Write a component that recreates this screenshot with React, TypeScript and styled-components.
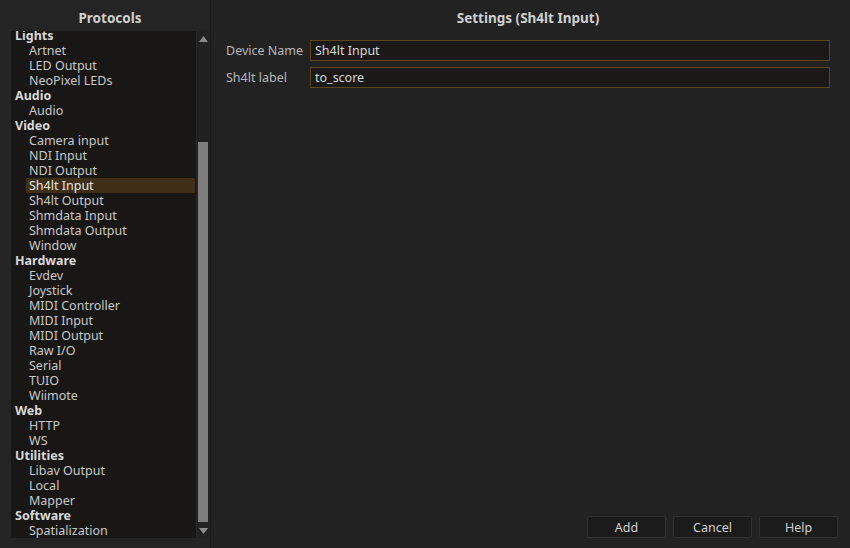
import styled, { createGlobalStyle } from "styled-components";

const groups: { title: string; items: string[] }[] = [
  { title: "Lights", items: ["Artnet", "LED Output", "NeoPixel LEDs"] },
  { title: "Audio", items: ["Audio"] },
  {
    title: "Video",
    items: [
      "Camera input",
      "NDI Input",
      "NDI Output",
      "Sh4lt Input",
      "Sh4lt Output",
      "Shmdata Input",
      "Shmdata Output",
      "Window",
    ],
  },
  {
    title: "Hardware",
    items: [
      "Evdev",
      "Joystick",
      "MIDI Controller",
      "MIDI Input",
      "MIDI Output",
      "Raw I/O",
      "Serial",
      "TUIO",
      "Wiimote",
    ],
  },
  { title: "Web", items: ["HTTP", "WS"] },
  { title: "Utilities", items: ["Libav Output", "Local", "Mapper"] },
  { title: "Software", items: ["Spatialization"] },
];

const selected = "Sh4lt Input";

function App() {
  return (
    <>
      <GlobalStyle />
      <Window>
        <Side>
          <Title>Protocols</Title>
          <ListBox>
            <ListScroll>
              <ListInner>
                {groups.map((g) => (
                  <div key={g.title}>
                    <Category>{g.title}</Category>
                    {g.items.map((item) => (
                      <Item key={g.title + item} active={item === selected}>
                        {item}
                      </Item>
                    ))}
                  </div>
                ))}
              </ListInner>
            </ListScroll>
            <ScrollBar>
              <Arrow>
                <svg width="9" height="6" viewBox="0 0 9 6">
                  <path d="M0 6 L4.5 0 L9 6 Z" fill="#8a8a8a" />
                </svg>
              </Arrow>
              <Track>
                <Thumb />
              </Track>
              <Arrow>
                <svg width="9" height="6" viewBox="0 0 9 6">
                  <path d="M0 0 L4.5 6 L9 0 Z" fill="#8a8a8a" />
                </svg>
              </Arrow>
            </ScrollBar>
          </ListBox>
        </Side>
        <Main>
          <Title>Settings (Sh4lt Input)</Title>
          <Form>
            <Label>Device Name</Label>
            <Field defaultValue="Sh4lt Input" />
            <Label>Sh4lt label</Label>
            <Field defaultValue="to_score" />
          </Form>
          <Buttons>
            <Button>Add</Button>
            <Button>Cancel</Button>
            <Button>Help</Button>
          </Buttons>
        </Main>
      </Window>
    </>
  );
}

export default App;

const GlobalStyle = createGlobalStyle`
  html, body {
    margin: 0;
    padding: 0;
    background: #222222;
  }
  body {
    font-family: "Noto Sans", "DejaVu Sans", sans-serif;
    font-size: 12.5px;
    color: #d0d0d0;
  }
`;

const Window = styled.div`
  width: 850px;
  height: 548px;
  display: flex;
  background: #222222;
  overflow: hidden;
`;

const Side = styled.div`
  width: 211px;
  flex: none;
  display: flex;
  flex-direction: column;
  padding: 0 1px 10px 11px;
  box-sizing: border-box;
  background: #242424;
  border-right: 1px solid #1c1c1c;
`;

const Title = styled.div`
  height: 31px;
  line-height: 37px;
  text-align: center;
  font-weight: bold;
  font-size: 13.5px;
  color: #cfcfcf;
  flex: none;
`;

const ListBox = styled.div`
  flex: 1;
  display: flex;
  background: #181716;
  min-height: 0;
`;

const ListScroll = styled.div`
  flex: 1;
  overflow: hidden;
`;

const ListInner = styled.div`
  margin-top: -3px;
  padding-right: 1px;
`;

const Category = styled.div`
  height: 15px;
  line-height: 15px;
  padding-left: 4px;
  font-weight: bold;
  color: #d8d8d8;
  white-space: nowrap;
`;

const Item = styled.div<{ active?: boolean }>`
  height: 15px;
  line-height: 15px;
  margin-left: 15px;
  padding-left: 3px;
  white-space: nowrap;
  color: ${(p) => (p.active ? "#e8e8e8" : "#c8c8c8")};
  background: ${(p) => (p.active ? "#3f2f17" : "transparent")};
`;

const ScrollBar = styled.div`
  width: 12px;
  flex: none;
  display: flex;
  flex-direction: column;
  background: #202020;
  border-left: 1px solid #262626;
`;

const Arrow = styled.div`
  height: 15px;
  flex: none;
  display: flex;
  align-items: center;
  justify-content: center;
  background: #222222;
`;

const Track = styled.div`
  flex: 1;
  display: flex;
  flex-direction: column;
  justify-content: flex-end;
  padding-bottom: 1px;
`;

const Thumb = styled.div`
  height: 380px;
  margin: 0 1px;
  background: #7d7d7d;
`;

const Main = styled.div`
  flex: 1;
  display: flex;
  flex-direction: column;
  padding: 0 20px 10px 15px;
`;

const Form = styled.div`
  display: grid;
  grid-template-columns: 84px 1fr;
  row-gap: 6px;
  align-items: center;
  margin-top: 9px;
`;

const Label = styled.div`
  color: #b8b8b8;
`;

const Field = styled.input`
  height: 21px;
  box-sizing: border-box;
  border: 1px solid #5e4419;
  background: #1a1918;
  color: #d8d8d8;
  font-family: inherit;
  font-size: 12.5px;
  padding: 0 4px;
  outline: none;
`;

const Buttons = styled.div`
  margin-top: auto;
  margin-right: -8px;
  display: flex;
  justify-content: flex-end;
  gap: 7px;
`;

const Button = styled.button`
  width: 79px;
  height: 22px;
  box-sizing: border-box;
  background: #1b1b1b;
  border: 1px solid #303030;
  border-radius: 2px;
  color: #d0d0d0;
  font-family: inherit;
  font-size: 12.5px;
  padding: 0;
`;
